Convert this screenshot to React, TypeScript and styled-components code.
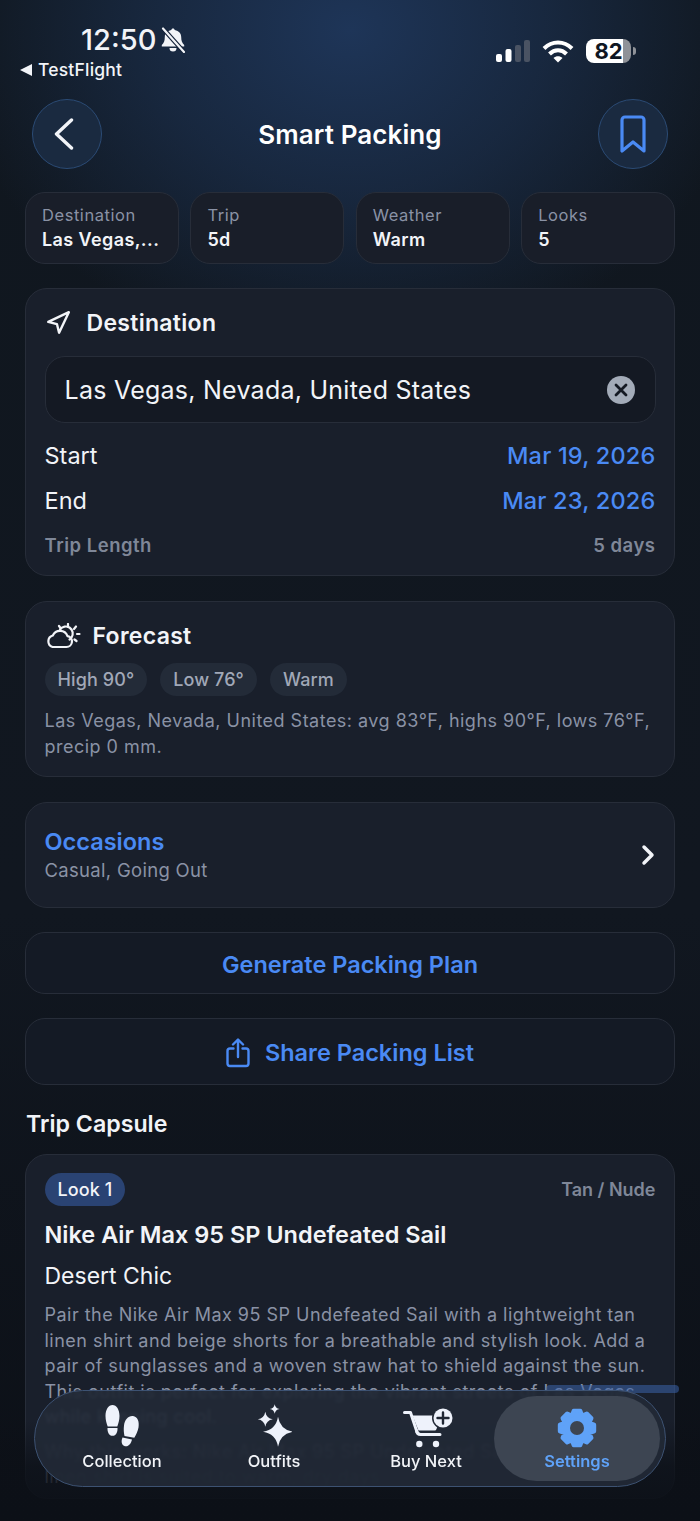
import React from "react";
import styled, { createGlobalStyle } from "styled-components";
import { ChevronRight, Navigation } from "lucide-react";

const colours = {
  blue: "#4a8af4",
  tabBlue: "#5fa2f8",
  text: "#f2f4f8",
  muted: "#8a92a5",
  card: "#191f2b",
  cardBorder: "#272d39",
  well: "#141923",
  chip: "#232b38",
};

const GlobalStyle = createGlobalStyle`
  html, body {
    margin: 0;
    padding: 0;
    background: #0c1017;
  }
  * {
    box-sizing: border-box;
  }
`;

const Page = styled("div")`
  position: relative;
  width: 700px;
  height: 1521px;
  overflow: hidden;
  font-family: Inter, "Noto Sans", sans-serif;
  color: ${colours.text};
  background:
    radial-gradient(ellipse 400px 330px at 50% 30px, #1e3558 0%, rgba(30, 53, 88, 0.55) 50%, rgba(30, 53, 88, 0) 100%),
    linear-gradient(180deg, #10171f 0%, #111720 60%, #0c1017 100%);
`;

const StatusBar = styled("div")`
  height: 99px;
  display: flex;
  justify-content: space-between;
  padding: 22px 69px 0 20px;
`;

const StatusLeft = styled("div")`
  display: flex;
  flex-direction: column;
`;

const Clock = styled("div")`
  display: flex;
  align-items: center;
  gap: 5px;
  margin-left: 61px;
  font-size: 29px;
  line-height: 35px;
  font-weight: 500;
`;

const BackToApp = styled("div")`
  display: flex;
  align-items: center;
  gap: 6px;
  font-size: 17.5px;
  letter-spacing: 0.2px;
  line-height: 24px;
  font-weight: 500;
  margin-top: 1px;
`;

const Triangle = styled("span")`
  width: 0;
  height: 0;
  border-top: 6px solid transparent;
  border-bottom: 6px solid transparent;
  border-right: 12px solid ${colours.text};
`;

const StatusRight = styled("div")`
  display: flex;
  align-items: center;
  gap: 12px;
  height: 24px;
  margin-top: 17px;
`;

const Battery = styled("div")`
  position: relative;
  width: 45px;
  height: 24px;
  border-radius: 8px;
  background: linear-gradient(90deg, #fff 0 82%, #8f9298 82% 100%);
  color: #0f1622;
  font-size: 22px;
  font-weight: 700;
  line-height: 24px;
  text-align: center;
  &::after {
    content: "";
    position: absolute;
    top: 8px;
    right: -5px;
    width: 3px;
    height: 8px;
    border-radius: 0 3px 3px 0;
    background: #8f9298;
  }
`;

const Header = styled("div")`
  height: 70px;
  padding: 0 32px;
  display: flex;
  align-items: center;
  justify-content: space-between;
`;

const RoundButton = styled("button")`
  width: 70px;
  height: 70px;
  padding: 0;
  border-radius: 50%;
  border: 1.5px solid #2b4b75;
  background: #1a2a40;
  display: flex;
  align-items: center;
  justify-content: center;
  color: ${colours.text};
`;

const Title = styled("h1")`
  margin: 0;
  font-size: 26px;
  letter-spacing: 0.1px;
  font-weight: 600;
  color: #fff;
`;

const Content = styled("div")`
  padding: 23px 25px 0;
  display: flex;
  flex-direction: column;
`;

const StatRow = styled("div")`
  display: grid;
  grid-template-columns: repeat(4, 1fr);
  gap: 11.5px;
  margin-bottom: 24px;
`;

const Stat = styled("div")`
  height: 72px;
  padding: 11px 16px 0;
  border-radius: 20px;
  background: #191e29;
  border: 1.5px solid ${colours.cardBorder};
`;

const StatLabel = styled("div")`
  font-size: 16.5px;
  letter-spacing: 0.55px;
  line-height: 22px;
  color: ${colours.muted};
`;

const StatValue = styled("div")`
  margin-top: 1px;
  font-size: 18px;
  letter-spacing: 0.4px;
  line-height: 25px;
  font-weight: 600;
  white-space: nowrap;
`;

const Card = styled("section")`
  background: ${colours.card};
  border: 1.5px solid ${colours.cardBorder};
  border-radius: 22px;
  padding: 0 18.5px;
  margin-bottom: 25px;
`;

const CardHeading = styled("div")<{ $gap: number }>`
  display: flex;
  align-items: center;
  gap: ${(p) => p.$gap}px;
  height: 33px;
  font-size: 23px;
  letter-spacing: 0.3px;
  font-weight: 600;
  color: ${colours.text};
`;

const DestinationCard = styled(Card)`
  height: 288px;
  padding-top: 17px;
`;

const SearchField = styled("div")`
  height: 67px;
  margin: 17px 0 10px;
  padding: 0 20px 0 19px;
  display: flex;
  align-items: center;
  justify-content: space-between;
  background: ${colours.well};
  border: 1.5px solid ${colours.cardBorder};
  border-radius: 20px;
  font-size: 25px;
  letter-spacing: 0.25px;
`;

const ClearButton = styled("span")`
  width: 28px;
  height: 28px;
  border-radius: 50%;
  background: #a3abb8;
  display: flex;
  align-items: center;
  justify-content: center;
`;

const DateRow = styled("div")`
  display: flex;
  align-items: center;
  justify-content: space-between;
  height: 45px;
  font-size: 23.5px;
`;

const DateValue = styled("span")`
  color: ${colours.blue};
  font-weight: 500;
  letter-spacing: 0.2px;
`;

const LengthRow = styled("div")`
  display: flex;
  align-items: center;
  justify-content: space-between;
  height: 44px;
  font-size: 18.5px;
  letter-spacing: 0.5px;
  font-weight: 600;
  color: #7f8798;
`;

const ForecastCard = styled(Card)`
  height: 176px;
  padding-top: 17px;
`;

const ChipRow = styled("div")`
  display: flex;
  gap: 13px;
  margin: 11px 0 12px;
`;

const Chip = styled("span")`
  height: 33px;
  padding: 0 13px;
  border-radius: 17px;
  background: ${colours.chip};
  display: flex;
  align-items: center;
  font-size: 18px;
  letter-spacing: 0.1px;
  font-weight: 500;
  color: #a1a8b7;
`;

const BodyText = styled("p")`
  margin: 0;
  font-size: 18px;
  letter-spacing: 0.48px;
  line-height: 25.5px;
  color: ${colours.muted};
`;

const OccasionsCard = styled(Card)`
  height: 106px;
  margin-bottom: 24px;
  display: flex;
  align-items: center;
  justify-content: space-between;
  padding-right: 10px;
`;

const OccasionsTitle = styled("div")`
  font-size: 23.5px;
  line-height: 30px;
  font-weight: 600;
  color: ${colours.blue};
`;

const OccasionsValue = styled("div")`
  font-size: 18.5px;
  letter-spacing: 0.3px;
  line-height: 26px;
  color: ${colours.muted};
`;

const ActionButton = styled("button")<{ $height: number }>`
  height: ${(p) => p.$height}px;
  margin-bottom: 24px;
  padding: 2px 6px 0;
  display: flex;
  align-items: center;
  justify-content: center;
  gap: 15px;
  background: #141a25;
  border: 1.5px solid ${colours.cardBorder};
  border-radius: 20px;
  font-family: inherit;
  font-size: 23.5px;
  font-weight: 600;
  color: ${colours.blue};
`;

const SectionTitle = styled("h2")`
  margin: 0 0 15px 1px;
  height: 30px;
  line-height: 30px;
  font-size: 23.2px;
  font-weight: 600;
  color: ${colours.text};
`;

const CapsuleCard = styled(Card)`
  height: 345px;
  padding-top: 18px;
  overflow: hidden;
`;

const LookRow = styled("div")`
  display: flex;
  align-items: center;
  justify-content: space-between;
`;

const LookBadge = styled("span")`
  height: 33px;
  padding: 0 13px;
  border-radius: 17px;
  background: #2a4373;
  display: flex;
  align-items: center;
  font-size: 18px;
  letter-spacing: 0.1px;
  font-weight: 500;
`;

const LookTone = styled("span")`
  font-size: 18px;
  font-weight: 600;
  color: #7f8798;
`;

const LookName = styled("div")`
  margin-top: 13px;
  font-size: 23.5px;
  line-height: 32px;
  font-weight: 600;
`;

const LookTheme = styled("div")`
  margin: 9px 0 10px;
  font-size: 23px;
  line-height: 32px;
`;

const WhyText = styled(BodyText)`
  margin-top: 9px;
`;

const Highlight = styled("div")`
  position: absolute;
  left: 546px;
  top: 1385px;
  width: 133px;
  height: 8px;
  border-radius: 4px;
  background: rgba(58, 98, 170, 0.55);
`;

const BottomFade = styled("div")`
  position: absolute;
  left: 0;
  right: 0;
  bottom: 0;
  height: 100px;
  background: linear-gradient(180deg, rgba(12, 16, 23, 0) 0%, rgba(12, 16, 23, 0.75) 45%, #0c1017 100%);
`;

const TabBar = styled("nav")`
  position: absolute;
  left: 34px;
  top: 1390px;
  width: 632px;
  height: 97px;
  padding: 5px 5px 5px 11px;
  display: grid;
  grid-template-columns: 152px 152px 152px 1fr;
  border-radius: 49px;
  border: 1.5px solid #3d5272;
  background: rgba(34, 41, 54, 0.92);
  backdrop-filter: blur(1.5px);
`;

const Tab = styled("div")<{ $active?: boolean }>`
  display: flex;
  flex-direction: column;
  align-items: center;
  justify-content: flex-end;
  padding-bottom: 9px;
  gap: 2px;
  font-size: 16.5px;
  line-height: 22px;
  font-weight: ${(p) => (p.$active ? 600 : 500)};
  color: ${(p) => (p.$active ? colours.tabBlue : colours.text)};
  ${(p) =>
    p.$active &&
    `
    margin-left: -8px;
    border-radius: 43px;
    background: #3d4552;
  `}
`;

const CartSvg = styled("svg")`
  margin-left: 4px;
`;

const BackSvg = styled("svg")`
  margin-right: 6px;
`;

const star = (x: number, y: number, r: number) =>
  `M${x} ${y - r}Q${x + r * 0.14} ${y - r * 0.14} ${x + r} ${y}Q${x + r * 0.14} ${y + r * 0.14} ${x} ${y + r}Q${x - r * 0.14} ${y + r * 0.14} ${x - r} ${y}Q${x - r * 0.14} ${y - r * 0.14} ${x} ${y - r}Z`;

// 8 tooth gear outline, points worked out from the centre
const gearPath = () => {
  const pts: string[] = [];
  for (let i = 0; i < 8; i++) {
    const a = (i * Math.PI) / 4 - Math.PI / 2;
    const spots: [number, number][] = [
      [-0.39, 13.5],
      [-0.19, 17.5],
      [0.19, 17.5],
      [0.39, 13.5],
    ];
    spots.forEach(([da, r]) => {
      pts.push(`${(20 + r * Math.cos(a + da)).toFixed(2)} ${(20 + r * Math.sin(a + da)).toFixed(2)}`);
    });
  }
  return `M${pts.join("L")}Z`;
};

const BellIcon = () => (
  <svg width="24" height="26" viewBox="0 0 24 26">
    <path d="M12 1.500c-1 0-1.600.7-1.700 1.600C6 4 3.800 6.600 3.800 10c0 4-1 6-3 8v1.500h22.400V18c-2-2-3-4-3-8 0-3.400-2.200-6-6.500-6.900C13.600 2.200 13 1.500 12 1.500Z" fill="#f2f4f8" />
    <path d="M8.500 21h7a3.500 3.500 0 0 1-7 0Z" fill="#f2f4f8" />
    <path d="M2 1.500 23 25" stroke="#15233a" strokeWidth="4.500" />
    <path d="M2 1.500 23 25" stroke="#f2f4f8" strokeWidth="2.200" strokeLinecap="round" />
  </svg>
);

const SignalIcon = () => (
  <svg width="34" height="22" viewBox="0 0 34 22">
    <rect x="0" y="14" width="6" height="8" rx="2" fill="#fff" />
    <rect x="9.500" y="9" width="6" height="13" rx="2" fill="#fff" />
    <rect x="19" y="5" width="6" height="17" rx="2" fill="#4a5363" />
    <rect x="28" y="0" width="6" height="22" rx="2" fill="#4a5363" />
  </svg>
);

const WifiIcon = () => (
  <svg width="32" height="24" viewBox="0 0 32 24" fill="none" stroke="#fff" strokeWidth="4">
    <path d="M2 9.500C10 1.500 22 1.500 30 9.500" />
    <path d="M7.500 15C12.500 10 19.500 10 24.500 15" />
    <path d="M16 23.500 11.500 19C14 16.800 18 16.800 20.500 19Z" fill="#fff" stroke="none" />
  </svg>
);

const BackIcon = () => (
  <BackSvg width="20" height="32" viewBox="0 0 20 32" fill="none" stroke="#f2f4f8" strokeWidth="3.400" strokeLinecap="round" strokeLinejoin="round">
    <path d="M17.500 2 2.500 16l15 14" />
  </BackSvg>
);

const BookmarkIcon = () => (
  <svg width="26" height="38" viewBox="0 0 26 38" fill="none" stroke={colours.blue} strokeWidth="3.200" strokeLinejoin="round" strokeLinecap="round">
    <path d="M2 5a3 3 0 0 1 3-3h16a3 3 0 0 1 3 3v31l-11-9-11 9Z" />
  </svg>
);

const ClearIcon = () => (
  <svg width="14" height="14" viewBox="0 0 14 14" stroke="#141923" strokeWidth="2.800" strokeLinecap="round">
    <path d="M2 2 12 12M12 2 2 12" />
  </svg>
);

const CloudSunIcon = () => (
  <svg width="36" height="26" viewBox="0 0 36 26" fill="none" stroke="#f2f4f8" strokeWidth="2.200" strokeLinecap="round" strokeLinejoin="round">
    <path d="M7.500 24h14a5.500 5.500 0 0 0 1-10.900A8 8 0 0 0 7.800 12.500 6 6 0 0 0 7.500 24Z" />
    <path d="M15 6.500a7 7 0 0 1 11.500 8 6 6 0 0 1-2 2" />
    <path d="M23 1v3M31 3.500l-2 2.500M34.500 11h-2.500M31.500 18l-2-1.500M14 3l1.500 2" />
  </svg>
);

const ShareIcon = () => (
  <svg width="24" height="30" viewBox="0 0 24 30" fill="none" stroke={colours.blue} strokeWidth="2.400" strokeLinecap="round" strokeLinejoin="round">
    <path d="M7.500 10.500H4a2.500 2.500 0 0 0-2.500 2.500v12.500A2.500 2.500 0 0 0 4 28h16a2.500 2.500 0 0 0 2.500-2.500V13a2.500 2.500 0 0 0-2.500-2.500h-3.500" />
    <path d="M12 19V2M7 6.500 12 1.500l5 5" />
  </svg>
);

const FootprintsIcon = () => (
  <svg width="36" height="44" viewBox="0 0 36 44" fill="#eef2fb">
    <path d="M1.500 12C1.500 5.500 4.500 1 8.500 1s7 4.500 7 11c0 4-1.200 7.500-2.200 10.500H3.700C2.700 19.500 1.500 16 1.500 12Z" />
    <path d="M3.500 24h10c.2 4-1.500 7.800-5 7.800S3.300 28 3.500 24Z" />
    <path d="M20 21.500c.6-6 4.500-10 9-9.500s6.500 5.500 5.500 11.500c-.7 4-2.500 7.200-4.200 10.300L20.500 32C19.800 28.500 19.500 25.500 20 21.500Z" />
    <path d="M18.500 33.500 28 35.500c-.8 4-3.600 7.400-7 6.700s-4.200-4.700-2.500-8.700Z" />
  </svg>
);

const SparklesIcon = () => (
  <svg width="36" height="44" viewBox="0 0 36 44" fill="#eef2fb">
    <path d={star(22, 27.7, 15)} />
    <path d={star(9.300, 15.300, 7.500)} />
    <path d={star(18.700, 5, 4.800)} />
  </svg>
);

const CartIcon = () => (
  <CartSvg width="50" height="40" viewBox="0 0 50 40" fill="none">
    <path d="M1.500 4.500H7.500L14 24" stroke="#eef2fb" strokeWidth="3" strokeLinecap="round" strokeLinejoin="round" />
    <path d="M9.500 7.500H31l6 4-3.500 9.500a2 2 0 0 1-2 1.500H15.500Z" fill="#eef2fb" />
    <path d="M13.500 22.500q.5 4 4 4H37" stroke="#eef2fb" strokeWidth="3" strokeLinecap="round" />
    <circle cx="16.300" cy="36" r="3.200" fill="#eef2fb" />
    <circle cx="33" cy="36" r="3.200" fill="#eef2fb" />
    <circle cx="40" cy="10" r="11" fill="#232a37" />
    <circle cx="40" cy="10" r="9.500" fill="#eef2fb" />
    <path d="M40 4.500v11M34.500 10h11" stroke="#1f2633" strokeWidth="2.400" strokeLinecap="round" />
  </CartSvg>
);

const GearIcon = () => (
  <svg width="40" height="40" viewBox="0 0 40 40">
    <path d={gearPath()} fill={colours.tabBlue} stroke={colours.tabBlue} strokeWidth="4" strokeLinejoin="round" />
    <circle cx="20" cy="20" r="7" fill="#3d4552" />
  </svg>
);

const stats = [
  { label: "Destination", value: "Las Vegas,..." },
  { label: "Trip", value: "5d" },
  { label: "Weather", value: "Warm" },
  { label: "Looks", value: "5" },
];

const tabs = [
  { label: "Collection", icon: <FootprintsIcon /> },
  { label: "Outfits", icon: <SparklesIcon /> },
  { label: "Buy Next", icon: <CartIcon /> },
  { label: "Settings", icon: <GearIcon />, active: true },
];

export default function App() {
  return (
    <Page>
      <GlobalStyle />
      <StatusBar>
        <StatusLeft>
          <Clock>
            12:50
            <BellIcon />
          </Clock>
          <BackToApp>
            <Triangle />
            TestFlight
          </BackToApp>
        </StatusLeft>
        <StatusRight>
          <SignalIcon />
          <WifiIcon />
          <Battery>82</Battery>
        </StatusRight>
      </StatusBar>

      <Header>
        <RoundButton>
          <BackIcon />
        </RoundButton>
        <Title>Smart Packing</Title>
        <RoundButton>
          <BookmarkIcon />
        </RoundButton>
      </Header>

      <Content>
        <StatRow>
          {stats.map((stat) => (
            <Stat key={stat.label}>
              <StatLabel>{stat.label}</StatLabel>
              <StatValue>{stat.value}</StatValue>
            </Stat>
          ))}
        </StatRow>

        <DestinationCard>
          <CardHeading $gap={16}>
            <Navigation size={26} strokeWidth={2.2} />
            Destination
          </CardHeading>
          <SearchField>
            Las Vegas, Nevada, United States
            <ClearButton>
              <ClearIcon />
            </ClearButton>
          </SearchField>
          <DateRow>
            Start
            <DateValue>Mar 19, 2026</DateValue>
          </DateRow>
          <DateRow>
            End
            <DateValue>Mar 23, 2026</DateValue>
          </DateRow>
          <LengthRow>
            Trip Length
            <span>5 days</span>
          </LengthRow>
        </DestinationCard>

        <ForecastCard>
          <CardHeading $gap={12}>
            <CloudSunIcon />
            Forecast
          </CardHeading>
          <ChipRow>
            <Chip>High 90°</Chip>
            <Chip>Low 76°</Chip>
            <Chip>Warm</Chip>
          </ChipRow>
          <BodyText>Las Vegas, Nevada, United States: avg 83°F, highs 90°F, lows 76°F, precip 0 mm.</BodyText>
        </ForecastCard>

        <OccasionsCard>
          <div>
            <OccasionsTitle>Occasions</OccasionsTitle>
            <OccasionsValue>Casual, Going Out</OccasionsValue>
          </div>
          <ChevronRight size={32} strokeWidth={2.6} />
        </OccasionsCard>

        <ActionButton $height={62}>Generate Packing Plan</ActionButton>
        <ActionButton $height={67}>
          <ShareIcon />
          Share Packing List
        </ActionButton>

        <SectionTitle>Trip Capsule</SectionTitle>
        <CapsuleCard>
          <LookRow>
            <LookBadge>Look 1</LookBadge>
            <LookTone>Tan / Nude</LookTone>
          </LookRow>
          <LookName>Nike Air Max 95 SP Undefeated Sail</LookName>
          <LookTheme>Desert Chic</LookTheme>
          <BodyText>
            Pair the Nike Air Max 95 SP Undefeated Sail with a lightweight tan linen shirt and beige shorts for a
            breathable and stylish look. Add a pair of sunglasses and a woven straw hat to shield against the sun. This
            outfit is perfect for exploring the vibrant streets of Las Vegas while keeping cool.
          </BodyText>
          <WhyText>
            Why this works: Nike Air Max 95 SP Undefeated Sail with the tan linen shirt is suited to warm, dry days.
          </WhyText>
        </CapsuleCard>
      </Content>

      <Highlight />
      <BottomFade />
      <TabBar>
        {tabs.map((tab) => (
          <Tab key={tab.label} $active={tab.active}>
            {tab.icon}
            {tab.label}
          </Tab>
        ))}
      </TabBar>
    </Page>
  );
}
